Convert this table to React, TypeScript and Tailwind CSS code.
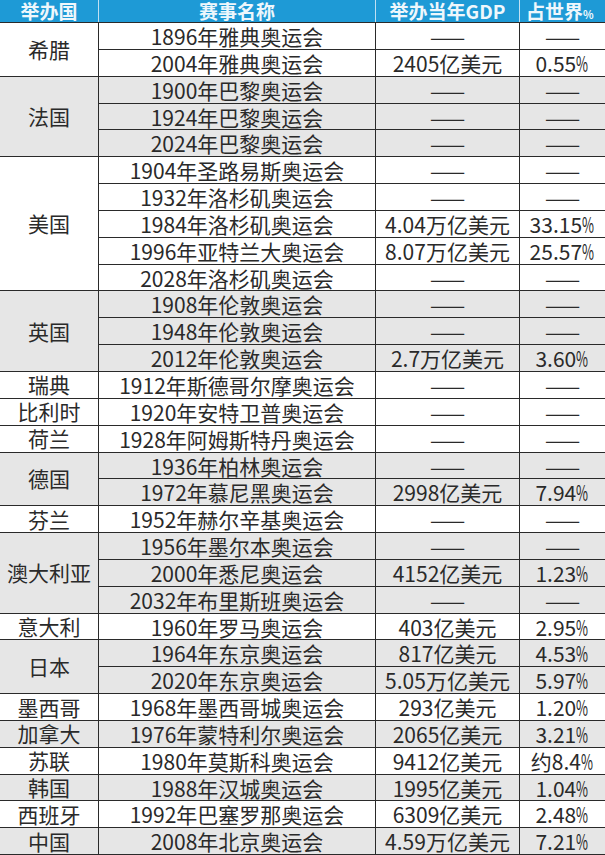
const FONT = { fontFamily: '"Noto Sans CJK SC", "Noto Sans", sans-serif' };

type Row = { event: string; gdp?: string; share?: string };
type Group = { country: string; gray?: boolean; rows: Row[] };

const groups: Group[] = [
  { country: "希腊", rows: [{ event: "1896年雅典奥运会" }, { event: "2004年雅典奥运会", gdp: "2405亿美元", share: "0.55" }] },
  { country: "法国", gray: true, rows: [{ event: "1900年巴黎奥运会" }, { event: "1924年巴黎奥运会" }, { event: "2024年巴黎奥运会" }] },
  {
    country: "美国",
    rows: [
      { event: "1904年圣路易斯奥运会" },
      { event: "1932年洛杉矶奥运会" },
      { event: "1984年洛杉矶奥运会", gdp: "4.04万亿美元", share: "33.15" },
      { event: "1996年亚特兰大奥运会", gdp: "8.07万亿美元", share: "25.57" },
      { event: "2028年洛杉矶奥运会" },
    ],
  },
  {
    country: "英国",
    gray: true,
    rows: [{ event: "1908年伦敦奥运会" }, { event: "1948年伦敦奥运会" }, { event: "2012年伦敦奥运会", gdp: "2.7万亿美元", share: "3.60" }],
  },
  { country: "瑞典", rows: [{ event: "1912年斯德哥尔摩奥运会" }] },
  { country: "比利时", rows: [{ event: "1920年安特卫普奥运会" }] },
  { country: "荷兰", rows: [{ event: "1928年阿姆斯特丹奥运会" }] },
  { country: "德国", gray: true, rows: [{ event: "1936年柏林奥运会" }, { event: "1972年慕尼黑奥运会", gdp: "2998亿美元", share: "7.94" }] },
  { country: "芬兰", rows: [{ event: "1952年赫尔辛基奥运会" }] },
  {
    country: "澳大利亚",
    gray: true,
    rows: [{ event: "1956年墨尔本奥运会" }, { event: "2000年悉尼奥运会", gdp: "4152亿美元", share: "1.23" }, { event: "2032年布里斯班奥运会" }],
  },
  { country: "意大利", rows: [{ event: "1960年罗马奥运会", gdp: "403亿美元", share: "2.95" }] },
  {
    country: "日本",
    gray: true,
    rows: [
      { event: "1964年东京奥运会", gdp: "817亿美元", share: "4.53" },
      { event: "2020年东京奥运会", gdp: "5.05万亿美元", share: "5.97" },
    ],
  },
  { country: "墨西哥", rows: [{ event: "1968年墨西哥城奥运会", gdp: "293亿美元", share: "1.20" }] },
  { country: "加拿大", gray: true, rows: [{ event: "1976年蒙特利尔奥运会", gdp: "2065亿美元", share: "3.21" }] },
  { country: "苏联", rows: [{ event: "1980年莫斯科奥运会", gdp: "9412亿美元", share: "约8.4" }] },
  { country: "韩国", gray: true, rows: [{ event: "1988年汉城奥运会", gdp: "1995亿美元", share: "1.04" }] },
  { country: "西班牙", rows: [{ event: "1992年巴塞罗那奥运会", gdp: "6309亿美元", share: "2.48" }] },
  { country: "中国", gray: true, rows: [{ event: "2008年北京奥运会", gdp: "4.59万亿美元", share: "7.21" }] },
];

function Percent() {
  return <span className="mr-[-6px] inline-block origin-left scale-x-[0.62]">%</span>;
}

export default function App() {
  return (
    <div className="h-[855px] w-[605px] overflow-hidden bg-white text-[#2a2a2a]" style={FONT}>
      <div className="flex h-[23px] overflow-hidden border-b border-[#2a2a2a] bg-[#1e9ad6] text-[19px] font-bold leading-[22px] text-[#eef7fc]">
        <div className="w-[99px] border-r border-[#bfe0f3] text-center">举办国</div>
        <div className="w-[277px] border-r border-[#bfe0f3] text-center">赛事名称</div>
        <div className="w-[144px] border-r border-[#bfe0f3] text-center">举办当年GDP</div>
        <div className="flex-1 whitespace-nowrap pl-[6px]">
          占世界<span className="text-[11px]">%</span>
        </div>
      </div>

      {groups.map((g) => (
        <div key={g.country} className={`flex ${g.gray ? "bg-[#e6e6e6]" : "bg-white"}`}>
          <div className="flex w-[99px] items-center justify-center border-b border-r border-[#2a2a2a] text-[21px] leading-none">
            {g.country}
          </div>
          <div className="flex flex-1 flex-col">
            {g.rows.map((r) => (
              <div
                key={r.event}
                className="flex h-[26.85px] overflow-hidden border-b border-[#2a2a2a] text-[21px] leading-[26px]"
              >
                <div className="w-[277px] whitespace-nowrap border-r border-[#2a2a2a] text-center">{r.event}</div>
                <div className="w-[144px] whitespace-nowrap border-r border-[#2a2a2a] text-center">
                  {r.gdp ?? "——"}
                </div>
                <div className="flex-1 whitespace-nowrap text-center">
                  {r.share ? (
                    <>
                      {r.share}
                      <Percent />
                    </>
                  ) : (
                    "——"
                  )}
                </div>
              </div>
            ))}
          </div>
        </div>
      ))}
    </div>
  );
}
